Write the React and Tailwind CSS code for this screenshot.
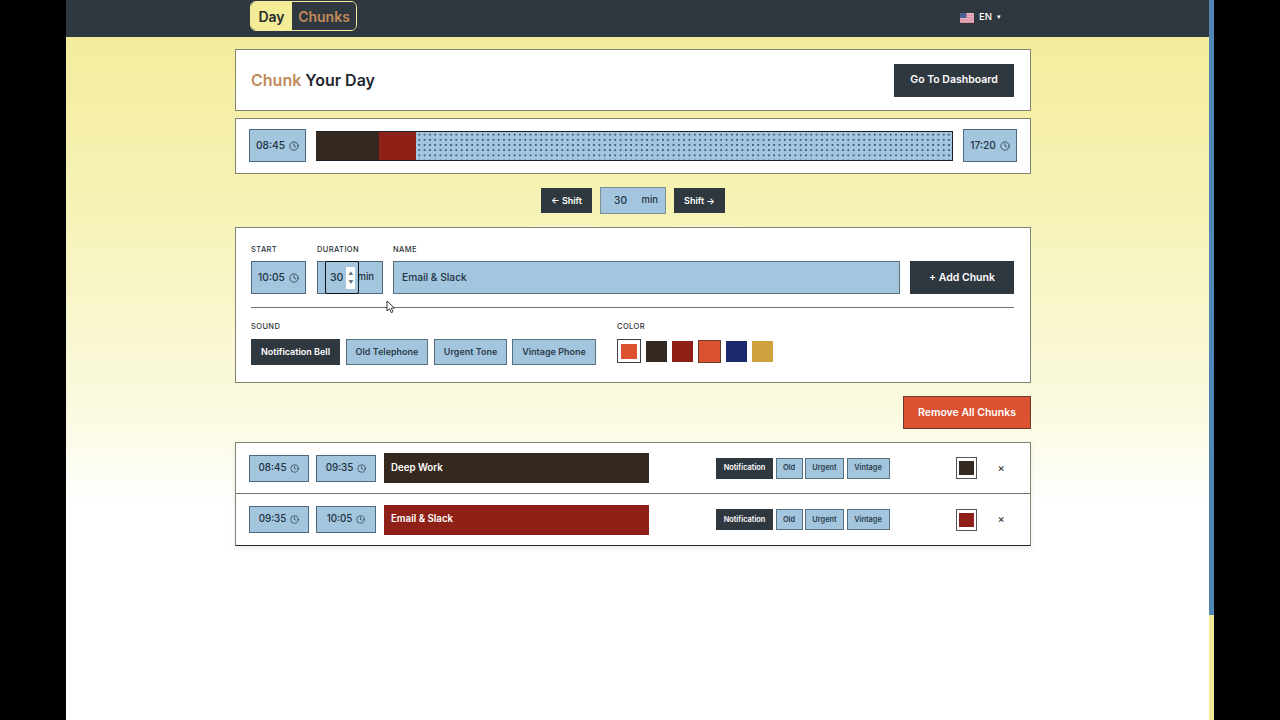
import React from "react";
import { Clock } from "lucide-react";

const Chip = ({ t, w, h = "h-[33px]", size = 10, text = "text-[10.2px]" }) => (
  <div className={`${w} ${h} shrink-0 flex items-center justify-center gap-[4px] bg-[#a3c5de] border border-[#4f6a7e] ${text} font-medium text-[#22323f]`}>
    <span>{t}</span>
    <Clock size={size} strokeWidth={1.8} className="text-[#22323f]" />
  </div>
);

const Flag = () => (
  <svg width="14" height="10" viewBox="0 0 14 10" className="shrink-0">
    <rect width="14" height="10" fill="#e7b9c4" />
    <rect y="1.5" width="14" height="1.2" fill="#d98a9e" />
    <rect y="4" width="14" height="1.2" fill="#d98a9e" />
    <rect y="6.5" width="14" height="1.2" fill="#d98a9e" />
    <rect y="8.8" width="14" height="1.2" fill="#d98a9e" />
    <rect width="6.5" height="5" fill="#4a5f93" />
  </svg>
);

const SoundBtn = ({ t, w, active }) => (
  <div className={`${w} h-[26px] flex items-center justify-center border text-[9px] font-semibold ${active ? "bg-[#2f383f] border-[#2f383f] text-white" : "bg-[#a3c5de] border-[#56707f] text-[#2c3e4c]"}`}>{t}</div>
);

const MiniBtn = ({ t, w, active }) => (
  <div className={`${w} h-[21px] flex items-center justify-center border text-[7.4px] font-semibold ${active ? "bg-[#2f383f] border-[#2f383f] text-white" : "bg-[#a3c5de] border-[#56707f] text-[#2c3e4c]"}`}>{t}</div>
);

const Label = ({ children, className = "" }) => (
  <div className={`text-[7.5px] leading-[10px] font-medium tracking-[0.4px] text-[#2b3238] ${className}`}>{children}</div>
);

const Row = ({ a, b, name, color, border }) => (
  <div className={`flex items-center h-[51px] pl-[13px] ${border ? "border-b border-[#6f7470]" : ""}`}>
    <Chip t={a} w="w-[60px]" h="h-[27px]" size={9} text="text-[9.8px]" />
    <div className="w-[7px]" />
    <Chip t={b} w="w-[60px]" h="h-[27px]" size={9} text="text-[9.8px]" />
    <div className="w-[8px]" />
    <div className={`w-[265px] h-[30px] flex items-center pl-[7px] text-[9.7px] font-semibold text-white ${color}`}>{name}</div>
    <div className="w-[67px]" />
    <div className="flex gap-[2.5px]">
      <MiniBtn t="Notification" w="w-[57px]" active />
      <MiniBtn t="Old" w="w-[27px]" />
      <MiniBtn t="Urgent" w="w-[39px]" />
      <MiniBtn t="Vintage" w="w-[43px]" />
    </div>
    <div className="w-[66px]" />
    <div className="w-[21px] h-[22px] bg-white border border-[#555] flex items-center justify-center">
      <div className={`w-[15px] h-[14px] ${color}`} />
    </div>
    <div className="ml-[21px] text-[11px] text-[#222]">×</div>
  </div>
);

export default function App() {
  return (
    <div className="flex w-[1280px] h-[720px] overflow-hidden bg-black font-['Inter',sans-serif]">
      <div className="w-[66px] shrink-0" />
      <div className="relative w-[1143px] shrink-0 h-full bg-[linear-gradient(180deg,#f4ec9c_5%,#f6f3b8_30%,#fbfae2_58%,#ffffff_70%)]">
        <header className="h-[37px] bg-[#2f383f] flex items-center pl-[184px]">
          <div className="flex h-[30px] w-[107px] -mt-[5px] rounded-[6px] border border-[#f3ea9a] overflow-hidden">
            <div className="w-[41px] bg-[#f4ec96] flex items-center justify-center text-[14px] font-semibold text-[#262a2e]">Day</div>
            <div className="flex-1 bg-[#2f383f] flex items-center justify-center text-[14px] font-semibold text-[#c4895a]">Chunks</div>
          </div>
          <div className="flex items-center gap-[5px] ml-[603px] -mt-[2px] text-[9.5px] font-medium text-white">
            <Flag />
            <span>EN</span>
            <span className="text-[7px]">▾</span>
          </div>
        </header>

        <main className="ml-[169px] w-[796px] pt-[12px]">
          <section className="h-[62px] bg-white border border-[#7f8570] flex items-center justify-between pl-[15px] pr-[16px]">
            <h1 className="text-[16px] font-semibold text-[#23262e]"><span className="text-[#c08a5c]">Chunk</span> Your Day</h1>
            <div className="w-[120px] h-[33px] bg-[#2f383f] flex items-center justify-center text-[10.5px] font-semibold text-white">Go To Dashboard</div>
          </section>

          <section className="mt-[7px] h-[56px] bg-white border border-[#7f8570] flex items-center pl-[13px] pr-[13px] gap-[10px]">
            <div className="mb-[1px]"><Chip t="08:45" w="w-[57px]" /></div>
            <div className="flex-1 h-[30px] flex border-y border-r border-[#14202c] bg-[#a3c5de] bg-[radial-gradient(circle,#3a5873_0.7px,transparent_1px)] bg-[length:5.3px_5.2px]">
              <div className="w-[63px] bg-[#35281e]" />
              <div className="w-[37px] bg-[#8e2018]" />
            </div>
            <div className="mb-[1px]"><Chip t="17:20" w="w-[54px]" /></div>
          </section>

          <div className="mt-[13px] flex items-center justify-center gap-[8px]">
            <div className="w-[51px] h-[25px] bg-[#2f383f] flex items-center justify-center text-[9px] font-semibold text-white">← Shift</div>
            <div className="w-[66px] h-[27px] bg-[#a3c5de] border border-[#7d8f92] flex items-center justify-between pl-[13px] pr-[7px] text-[10.2px] font-medium text-[#22323f]">
              <span>30</span><span className="text-[9.5px]">min</span>
            </div>
            <div className="w-[51px] h-[25px] bg-[#2f383f] flex items-center justify-center text-[9px] font-semibold text-white">Shift →</div>
          </div>

          <section className="relative mt-[13px] h-[156px] bg-white border border-[#7f8570] pl-[15px] pr-[16px] pt-[17px]">
            <div className="absolute -top-[2px] left-[295px] w-[64px] h-[1px] bg-white/50" />
            <div className="absolute -top-[2px] left-[438px] w-[65px] h-[1px] bg-white/50" />
            <div className="flex gap-[10px] items-start">
              <div className="w-[55px]">
                <Label>START</Label>
                <div className="mt-[6px]"><Chip t="10:05" w="w-[55px]" /></div>
              </div>
              <div className="w-[66px] ml-[1px]">
                <Label>DURATION</Label>
                <div className="relative mt-[6px] h-[33px] bg-[#a3c5de] border border-[#4f6a7e] flex items-center justify-end pr-[8px] text-[9.5px] font-medium text-[#22323f]">
                  min
                  <div className="absolute left-[7px] -top-px w-[34px] h-[33px] border-[1.5px] border-[#0e1216] rounded-[2px] flex items-center pl-[4px] text-[10.5px]">
                    <span>30</span>
                    <div className="ml-[3px] w-[9px] h-[22px] bg-white flex flex-col items-center justify-center gap-[3px] text-[#6b7280] text-[5px] leading-[6px]">
                      <span>▲</span><span>▼</span>
                    </div>
                  </div>
                </div>
              </div>
              <div className="flex-1">
                <Label>NAME</Label>
                <div className="mt-[6px] h-[33px] bg-[#a3c5de] border border-[#56707f] flex items-center pl-[8px] text-[10.2px] font-medium text-[#22323f]">Email &amp; Slack</div>
              </div>
              <div className="w-[104px] mt-[16px] h-[33px] bg-[#2f383f] flex items-center justify-center text-[10.5px] font-semibold text-white">+ Add Chunk</div>
            </div>
            <div className="mt-[13px] h-[1px] bg-[#6f7470]" />
            <div className="flex mt-[14px]">
              <div className="w-[366px]">
                <Label>SOUND</Label>
                <div className="mt-[7px] flex gap-[6px]">
                  <SoundBtn t="Notification Bell" w="w-[89px]" active />
                  <SoundBtn t="Old Telephone" w="w-[82px]" />
                  <SoundBtn t="Urgent Tone" w="w-[73px]" />
                  <SoundBtn t="Vintage Phone" w="w-[84px] -ml-[1px]" />
                </div>
              </div>
              <div>
                <Label>COLOR</Label>
                <div className="mt-[7px] flex items-center gap-[5px]">
                  <div className="w-[24px] h-[24px] bg-white border border-[#3c4348] flex items-center justify-center">
                    <div className="w-[16px] h-[15px] bg-[#dc5230]" />
                  </div>
                  <div className="w-[21px] h-[21px] bg-[#35281e]" />
                  <div className="w-[21px] h-[21px] bg-[#8e2018]" />
                  <div className="w-[23px] h-[23px] bg-[#dc5230] border border-[#6b3a28]" />
                  <div className="w-[21px] h-[21px] bg-[#1c2a6b]" />
                  <div className="w-[21px] h-[21px] bg-[#cfa23f]" />
                </div>
              </div>
            </div>
          </section>

          <div className="mt-[13px] flex justify-end">
            <div className="w-[128px] h-[33px] bg-[#dc5230] border border-[#6b3a28] flex items-center justify-center text-[10.5px] font-semibold text-white">Remove All Chunks</div>
          </div>

          <section className="mt-[13px] bg-white border border-[#7f8570] border-b-[#22282c] shadow-[0_2px_6px_rgba(0,0,0,0.08)]">
            <Row a="08:45" b="09:35" name="Deep Work" color="bg-[#35281e]" border />
            <Row a="09:35" b="10:05" name="Email & Slack" color="bg-[#8e2018]" />
          </section>
        </main>

        <svg width="10" height="14" viewBox="0 0 10 14" className="absolute left-[320px] top-[300px]">
          <path d="M1 1 L1 11 L3.5 8.8 L5.2 12.6 L7 11.8 L5.3 8.2 L8.4 8 Z" fill="#fff" stroke="#222" strokeWidth="0.9" />
        </svg>
      </div>
      <div className="w-[5px] shrink-0 flex flex-col">
        <div className="h-[615px] bg-[#4f86b3]" />
        <div className="flex-1 bg-[#f0e794]" />
      </div>
    </div>
  );
}
